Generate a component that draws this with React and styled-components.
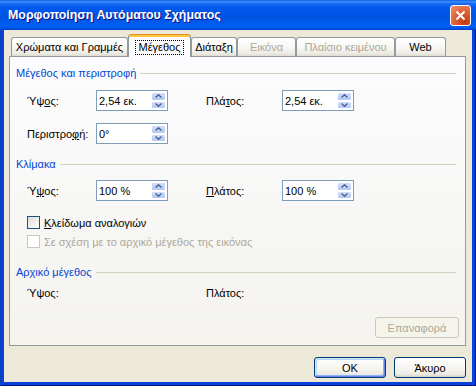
import styled, { createGlobalStyle } from "styled-components";

const GlobalStyle = createGlobalStyle`
  html, body {
    margin: 0;
    padding: 0;
    background: #fff;
  }
  body {
    font-family: "Liberation Sans", Arial, sans-serif;
    font-size: 11px;
    color: #000;
  }
`;

const tabs = [
  { label: "Χρώματα και Γραμμές", width: 117 },
  { label: "Μέγεθος", width: 63, selected: true },
  { label: "Διάταξη", width: 46 },
  { label: "Εικόνα", width: 59, disabled: true },
  { label: "Πλαίσιο κειμένου", width: 99, disabled: true },
  { label: "Web", width: 51 },
];

const Window = styled.div`
  width: 476px;
  height: 386px;
  box-sizing: border-box;
  display: flex;
  flex-direction: column;
  background: #0842d8;
  box-shadow: inset 1px 0 #0a3ebf, inset -1px 0 #00138c, inset 0 -1px #00138c;
`;

const TitleBar = styled.div`
  height: 30px;
  flex: none;
  display: flex;
  align-items: center;
  justify-content: space-between;
  padding: 0 5px 0 8px;
  background: linear-gradient(
    to bottom,
    #0a5eeb 0%,
    #3d8cfa 6%,
    #1a6bf2 12%,
    #0058ee 25%,
    #0054e3 60%,
    #0060f5 88%,
    #0050e0 95%,
    #003dd0 100%
  );
  color: #fff;
  font: bold 12.4px "Liberation Sans", Arial, sans-serif;
  text-shadow: 1px 1px #0f1089;
`;

const CloseButton = styled.div`
  width: 21px;
  height: 21px;
  box-sizing: border-box;
  border: 1px solid #fff;
  border-radius: 3px;
  background: radial-gradient(circle at 75% 85%, #c03a12, #e0663e 55%, #f29070);
  display: flex;
  align-items: center;
  justify-content: center;
`;

const Client = styled.div`
  flex: 1;
  margin: 0 4px 4px;
  background: #ece9d8;
  display: flex;
  flex-direction: column;
  padding: 5px 6px 4px 5px;
`;

const TabStrip = styled.div`
  height: 21px;
  display: flex;
  align-items: flex-end;
  padding-left: 2px;
  position: relative;
  z-index: 1;
`;

const Tab = styled.div`
  width: ${(p) => p.$w}px;
  height: ${(p) => (p.$selected ? 23 : 19)}px;
  margin-bottom: ${(p) => (p.$selected ? -1 : 0)}px;
  box-sizing: border-box;
  display: flex;
  align-items: center;
  justify-content: center;
  border: 1px solid #919b9c;
  border-bottom: none;
  border-radius: 3px 3px 0 0;
  color: ${(p) => (p.$disabled ? "#aca899" : "#000")};
  background: ${(p) =>
    p.$selected
      ? "#fcfcfe"
      : "linear-gradient(to bottom, #fff 0%, #f7f7f4 50%, #ecebe5 85%, #dedbd0 100%)"};
  ${(p) =>
    p.$selected &&
    `border-top: 1px solid #e68b2c; box-shadow: inset 0 2px #ffc83c;`}
`;

const FocusLabel = styled.span`
  outline: 1px dotted #000;
  padding: 0 2px 1px;
  margin-top: 2px;
`;

const Panel = styled.div`
  height: 290px;
  box-sizing: border-box;
  border: 1px solid #919b9c;
  background: linear-gradient(to bottom, #fcfcfe, #f4f3ee);
  display: flex;
  flex-direction: column;
  padding: 9px 6px 0 6px;
`;

const GroupHeader = styled.div`
  height: 14px;
  margin-top: ${(p) => p.$mt || 0}px;
  padding-right: 3px;
  display: flex;
  align-items: center;
  gap: 4px;
  color: #0046d5;
  white-space: nowrap;

  &::after {
    content: "";
    flex: 1;
    height: 1px;
    background: #d0d0bf;
  }
`;

const FormRow = styled.div`
  display: grid;
  grid-template-columns: 69px 110px 76px 72px;
  align-items: center;
  min-height: ${(p) => p.$h || 21}px;
  margin-top: ${(p) => p.$mt || 0}px;
  padding-left: 11px;
`;

const Label = styled.span`
  white-space: nowrap;
`;

const SpinBox = styled.div`
  width: 72px;
  height: 21px;
  box-sizing: border-box;
  border: 1px solid #7f9db9;
  background: #fff;
  display: flex;
  align-items: center;
  padding: 1px 1px 1px 2px;
`;

const SpinText = styled.span`
  flex: 1;
`;

const Spinner = styled.div`
  width: 15px;
  height: 17px;
  display: flex;
  flex-direction: column;
`;

const SpinHalf = styled.div`
  flex: 1;
  box-sizing: border-box;
  border: 1px solid #fff;
  border-radius: 2px;
  background: linear-gradient(to bottom, #d2defc, #b3c8f6);
  display: flex;
  align-items: center;
  justify-content: center;
`;

const CheckRow = styled.label`
  display: flex;
  align-items: center;
  gap: 4px;
  margin-top: ${(p) => p.$mt || 0}px;
  padding-left: 11px;
  color: ${(p) => (p.$disabled ? "#aca899" : "#000")};
`;

const Box = styled.span`
  width: 13px;
  height: 13px;
  box-sizing: border-box;
  border: 1px solid ${(p) => (p.$disabled ? "#cac8bb" : "#1c5180")};
  background: ${(p) =>
    p.$disabled ? "#fff" : "linear-gradient(135deg, #dcdcd7, #fff)"};
`;

const Button = styled.div`
  width: ${(p) => p.$w}px;
  height: 21px;
  box-sizing: border-box;
  display: flex;
  align-items: center;
  justify-content: center;
  border: 1px solid ${(p) => (p.$disabled ? "#c9c7ba" : "#003c74")};
  border-radius: 3px;
  color: ${(p) => (p.$disabled ? "#aca899" : "#000")};
  background: ${(p) =>
    p.$disabled
      ? "#f5f4ea"
      : "linear-gradient(to bottom, #fff 0%, #f4f3ee 60%, #ecebe6 85%, #d6d0c5 100%)"};
  ${(p) =>
    p.$default &&
    `box-shadow: inset -1px -1px #6982ee, inset 1px 1px #cee7ff, inset -2px -2px #8cb4f2, inset 2px 2px #bcd4f6;`}
`;

const ResetRow = styled.div`
  display: flex;
  justify-content: flex-end;
  margin-top: 17px;
`;

const ButtonRow = styled.div`
  display: flex;
  justify-content: flex-end;
  gap: 8px;
  margin-top: 11px;
`;

const Chevron = ({ up }) => (
  <svg width="7" height="4" viewBox="0 0 7 4">
    <path
      d={up ? "M0.5 3.5 L3.5 0.8 L6.5 3.5" : "M0.5 0.5 L3.5 3.2 L6.5 0.5"}
      fill="none"
      stroke="#4d6185"
      strokeWidth="1.4"
    />
  </svg>
);

const Spin = ({ value }) => (
  <SpinBox>
    <SpinText>{value}</SpinText>
    <Spinner>
      <SpinHalf>
        <Chevron up />
      </SpinHalf>
      <SpinHalf>
        <Chevron />
      </SpinHalf>
    </Spinner>
  </SpinBox>
);

export default function App() {
  return (
    <>
      <GlobalStyle />
      <Window>
        <TitleBar>
          <span>Μορφοποίηση Αυτόματου Σχήματος</span>
          <CloseButton>
            <svg width="11" height="11" viewBox="0 0 11 11">
              <path d="M1.5 1.5 L9.5 9.5 M9.5 1.5 L1.5 9.5" stroke="#fff" strokeWidth="2" />
            </svg>
          </CloseButton>
        </TitleBar>
        <Client>
          <TabStrip>
            {tabs.map((t) => (
              <Tab key={t.label} $w={t.width} $selected={t.selected} $disabled={t.disabled}>
                {t.selected ? <FocusLabel>{t.label}</FocusLabel> : t.label}
              </Tab>
            ))}
          </TabStrip>
          <Panel>
            <GroupHeader>Μέγεθος και περιστροφή</GroupHeader>
            <FormRow $mt={10}>
              <Label>
                Ύψ<u>ο</u>ς:
              </Label>
              <Spin value="2,54 εκ." />
              <Label>
                Πλά<u>τ</u>ος:
              </Label>
              <Spin value="2,54 εκ." />
            </FormRow>
            <FormRow $mt={12}>
              <Label>
                Περιστρο<u>φ</u>ή:
              </Label>
              <Spin value="0°" />
            </FormRow>
            <GroupHeader $mt={13}>Κλίμακα</GroupHeader>
            <FormRow $mt={9}>
              <Label>
                Ύ<u>ψ</u>ος:
              </Label>
              <Spin value="100 %" />
              <Label>
                <u>Π</u>λάτος:
              </Label>
              <Spin value="100 %" />
            </FormRow>
            <CheckRow $mt={15}>
              <Box />
              <span>
                <u>Κ</u>λείδωμα αναλογιών
              </span>
            </CheckRow>
            <CheckRow $mt={6} $disabled>
              <Box $disabled />
              <span>Σε σχέση με το αρχικό μέγεθος της εικόνας</span>
            </CheckRow>
            <GroupHeader $mt={17}>Αρχικό μέγεθος</GroupHeader>
            <FormRow $mt={7} $h={14}>
              <Label>Ύψος:</Label>
              <span />
              <Label>Πλάτος:</Label>
            </FormRow>
            <ResetRow>
              <Button $w={84} $disabled>
                Επαναφορά
              </Button>
            </ResetRow>
          </Panel>
          <ButtonRow>
            <Button $w={72} $default>
              OK
            </Button>
            <Button $w={72}>Άκυρο</Button>
          </ButtonRow>
        </Client>
      </Window>
    </>
  );
}
